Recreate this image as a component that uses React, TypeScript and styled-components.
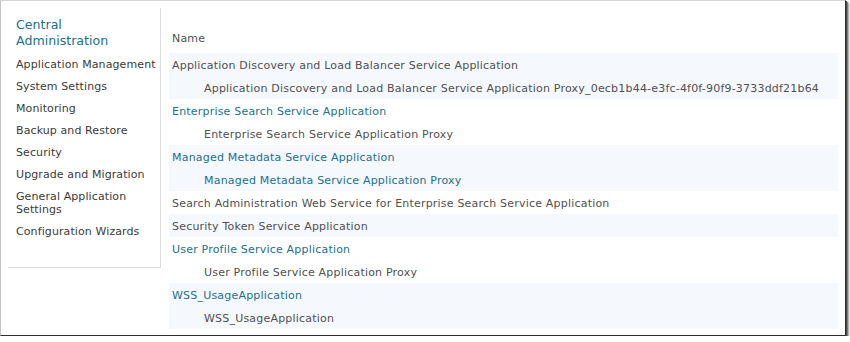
import React from "react";
import styled, { createGlobalStyle } from "styled-components";

const GlobalStyle = createGlobalStyle`
  html, body { margin: 0; padding: 0; background: #ffffff; }
  body { font-family: "DejaVu Sans", Verdana, sans-serif; }
`;

const Frame = styled.div`
  box-sizing: border-box;
  width: 846px;
  height: 336px;
  display: flex;
  align-items: flex-start;
  padding: 7px 0 0 7px;
  background: #ffffff;
  border-top: 1px solid #d4d4d4;
  border-left: 1px solid #c4c4c4;
  border-right: 1px solid #2e2e2e;
  border-bottom: 1px solid #2e2e2e;
  box-shadow: 1px 1px 0 #4a4a4a, 2px 2px 1px #7a7a7a, 3px 3px 2px #a8a8a8;
`;

const Nav = styled.nav`
  box-sizing: border-box;
  width: 153px;
  height: 260px;
  flex: none;
  padding: 9px 0 0 8px;
  border-right: 1px solid #dcdcdc;
  border-bottom: 1px solid #dcdcdc;
`;

const NavTitle = styled.div`
  font-size: 12.6px;
  line-height: 16px;
  color: #21708e;
  margin-bottom: 4px;
`;

const NavItem = styled.div`
  font-size: 11px;
  line-height: 13px;
  letter-spacing: 0.1px;
  padding: 4.5px 0;
  color: #3a3a3a;
`;

const Main = styled.main`
  width: 669px;
  margin-left: 8px;
  flex: none;
`;

const Header = styled.div`
  box-sizing: border-box;
  height: 45px;
  padding: 24px 0 0 3px;
  font-size: 11px;
  line-height: 13px;
  letter-spacing: 0.2px;
  color: #505050;
`;

const Group = styled.div<{ $shaded: boolean }>`
  background: ${(p) => (p.$shaded ? "#f5f8fd" : "transparent")};
`;

const Line = styled.div<{ $child?: boolean; $link?: boolean }>`
  height: 23px;
  display: flex;
  align-items: center;
  padding-top: 1px;
  box-sizing: border-box;
  padding-left: ${(p) => (p.$child ? "35px" : "3px")};
  font-size: 11px;
  letter-spacing: 0.2px;
  white-space: nowrap;
  color: ${(p) => (p.$link ? "#21708e" : "#505050")};
`;

type Entry = { name: string; link: boolean; proxy?: { name: string; link: boolean } };

const entries: Entry[] = [
  {
    name: "Application Discovery and Load Balancer Service Application",
    link: false,
    proxy: {
      name: "Application Discovery and Load Balancer Service Application Proxy_0ecb1b44-e3fc-4f0f-90f9-3733ddf21b64",
      link: false,
    },
  },
  {
    name: "Enterprise Search Service Application",
    link: true,
    proxy: { name: "Enterprise Search Service Application Proxy", link: false },
  },
  {
    name: "Managed Metadata Service Application",
    link: true,
    proxy: { name: "Managed Metadata Service Application Proxy", link: true },
  },
  { name: "Search Administration Web Service for Enterprise Search Service Application", link: false },
  { name: "Security Token Service Application", link: false },
  {
    name: "User Profile Service Application",
    link: true,
    proxy: { name: "User Profile Service Application Proxy", link: false },
  },
  {
    name: "WSS_UsageApplication",
    link: true,
    proxy: { name: "WSS_UsageApplication", link: false },
  },
];

const navItems = [
  "Application Management",
  "System Settings",
  "Monitoring",
  "Backup and Restore",
  "Security",
  "Upgrade and Migration",
  "General Application Settings",
  "Configuration Wizards",
];

export default function App() {
  return (
    <>
      <GlobalStyle />
      <Frame>
        <Nav>
          <NavTitle>
            Central
            <br />
            Administration
          </NavTitle>
          {navItems.map((n) => (
            <NavItem key={n}>
              {n === "General Application Settings" ? (
                <>
                  General Application
                  <br />
                  Settings
                </>
              ) : (
                n
              )}
            </NavItem>
          ))}
        </Nav>
        <Main>
          <Header>Name</Header>
          {entries.map((e, i) => (
            <Group key={e.name + i} $shaded={i % 2 === 0}>
              <Line $link={e.link}>{e.name}</Line>
              {e.proxy && (
                <Line $child $link={e.proxy.link}>
                  {e.proxy.name}
                </Line>
              )}
            </Group>
          ))}
        </Main>
      </Frame>
    </>
  );
}
